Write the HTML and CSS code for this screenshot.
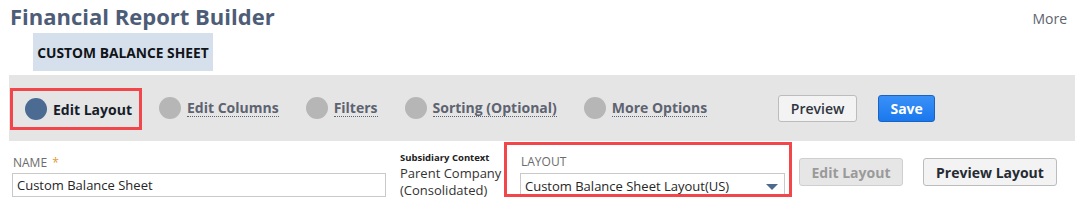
FILE: index.html
```html
<!DOCTYPE html>
<html>
<head>
<meta charset="utf-8">
<link rel="stylesheet" href="styles.css">
</head>
<body>
<div class="header">
  <h1 class="title">Financial Report Builder</h1>
  <a class="more">More</a>
</div>
<div class="badge">CUSTOM BALANCE SHEET</div>
<div class="bar">
  <div class="step active"><span class="dot"></span><span class="label">Edit Layout</span></div>
  <div class="step"><span class="dot"></span><span class="label">Edit Columns</span></div>
  <div class="step"><span class="dot"></span><span class="label">Filters</span></div>
  <div class="step"><span class="dot"></span><span class="label">Sorting (Optional)</span></div>
  <div class="step"><span class="dot"></span><span class="label">More Options</span></div>
  <button class="btn btn-preview">Preview</button>
  <button class="btn btn-save">Save</button>
</div>
<div class="form">
  <div class="field name-field">
    <label class="flabel">NAME <span class="req">*</span></label>
    <div class="input">Custom Balance Sheet</div>
  </div>
  <div class="subsidiary">
    <div class="sub-label">Subsidiary Context</div>
    <div class="sub-value">Parent Company<br>(Consolidated)</div>
  </div>
  <div class="layout-box">
    <label class="flabel">LAYOUT</label>
    <div class="select">Custom Balance Sheet Layout(US)<span class="arrow"></span></div>
  </div>
  <button class="btn btn-disabled">Edit Layout</button>
  <button class="btn btn-plain">Preview Layout</button>
</div>
</body>
</html>
```
FILE: styles.css
```css
* { box-sizing: border-box; }
body {
  margin: 0;
  font-family: "Open Sans", "Liberation Sans", sans-serif;
  background: #fff;
  width: 1083px;
  height: 204px;
  overflow: hidden;
}
.header {
  display: flex;
  justify-content: space-between;
  align-items: flex-start;
  padding: 0 16px 0 10px;
  height: 33px;
}
.title {
  margin: 0;
  font-size: 22px;
  font-weight: 700;
  color: #4e5d77;
  line-height: 33px;
}
.more {
  font-size: 14px;
  color: #5e6470;
  margin-top: 9px;
}
.badge {
  margin-left: 33px;
  width: 180px;
  height: 38px;
  background: #d6e0ec;
  font-size: 13.8px;
  font-weight: 700;
  color: #111418;
  display: flex;
  align-items: center;
  justify-content: center;
}
.bar {
  margin: 4px 0 0 9px;
  width: 1066px;
  height: 66px;
  background: #e5e5e5;
  display: flex;
  align-items: center;
  padding-left: 1px;
}
.step {
  display: flex;
  align-items: center;
  margin-right: 27px;
}
.step .dot {
  width: 22px;
  height: 22px;
  border-radius: 50%;
  background: #b6b6b6;
  margin-right: 6px;
  flex: none;
}
.step .label {
  font-size: 14px;
  font-weight: 700;
  color: #5d6370;
  border-bottom: 1px dotted #5d6370;
  line-height: 17px;
}
.step.active {
  border: 3px solid #f1464a;
  height: 42px;
  padding: 0 7px 0 12px;
  margin-right: 17px;
  margin-top: 2px;
}
.step.active .dot { background: #4b6b93; }
.step.active .label { color: #161c2a; border-bottom: none; }
.btn {
  font-family: "Open Sans", "Liberation Sans", sans-serif;
  font-size: 14px;
  height: 27px;
  border-radius: 3px;
  padding: 0;
  cursor: pointer;
}
.btn-preview {
  margin-left: 44px;
  width: 79px;
  background: #f3f3f3;
  border: 1px solid #bcbcbc;
  color: #2f3540;
  font-weight: 600;
}
.btn-save {
  margin-left: 21px;
  width: 57px;
  background: linear-gradient(#3a90f7, #1a78ee);
  border: 1px solid #1a63c0;
  color: #fff;
  font-weight: 700;
}
.form {
  display: flex;
  align-items: flex-start;
  padding-left: 12px;
  margin-top: 1px;
}
.flabel {
  display: block;
  font-size: 12px;
  color: #6b6b6b;
  line-height: 14px;
}
.req { color: #e09a35; margin-left: 2px; }
.name-field { width: 374px; padding-top: 14px; }
.name-field .flabel { margin-left: 1px; margin-bottom: 3px; }
.input {
  height: 24px;
  border: 1px solid #c9c9c9;
  font-size: 13px;
  color: #262626;
  padding: 0 0 0 4px;
  line-height: 22px;
}
.subsidiary { margin-left: 14px; padding-top: 9px; width: 104px; }
.sub-label { font-size: 9.5px; font-weight: 700; color: #222; line-height: 14px; }
.sub-value { font-size: 13px; color: #333; line-height: 17px; }
.layout-box {
  border: 3px solid #f1464a;
  width: 288px;
  height: 55px;
  padding: 10px 4px 0 13px;
  overflow: hidden;
}
.layout-box .flabel { margin-bottom: 4px; margin-left: 1px; }
.select {
  position: relative;
  height: 26px;
  border: 1px solid #c9c9c9;
  font-size: 13px;
  color: #262626;
  padding-left: 4px;
  line-height: 24px;
}
.arrow {
  position: absolute;
  right: 6px;
  top: 10px;
  width: 0;
  height: 0;
  border-left: 6px solid transparent;
  border-right: 6px solid transparent;
  border-top: 6px solid #4d6a8e;
}
.btn-disabled {
  margin-left: 7px;
  margin-top: 16px;
  width: 104px;
  height: 28px;
  background: #e6e6e6;
  border: 1px solid #cfcfcf;
  color: #9a9a9a;
  font-weight: 700;
}
.btn-plain {
  margin-left: 20px;
  margin-top: 16px;
  width: 134px;
  height: 28px;
  background: #f3f3f3;
  border: 1px solid #bcbcbc;
  color: #262b33;
  font-weight: 700;
}
```
